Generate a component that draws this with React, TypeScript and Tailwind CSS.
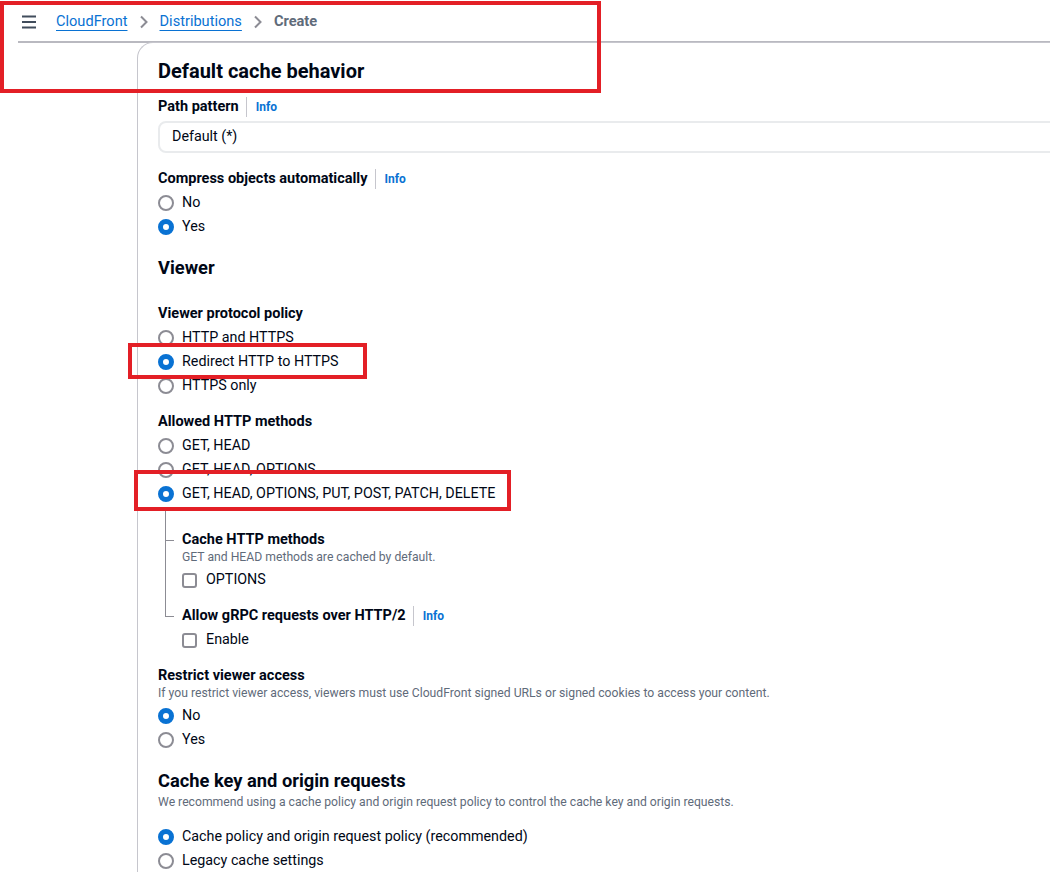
import React from "react";

const font = { fontFamily: 'Roboto, "Liberation Sans", Arial, sans-serif' };

function Radio({ label, checked = false }: { label: string; checked?: boolean }) {
  return (
    <div className="flex h-6 items-center gap-2">
      <span
        className={
          checked
            ? "box-border h-4 w-4 shrink-0 rounded-full border-[5px] border-[#0972d3] bg-white"
            : "box-border h-4 w-4 shrink-0 rounded-full border-2 border-[#8c8c94] bg-white"
        }
      />
      <span className="text-[14.3px] text-[#000716]">{label}</span>
    </div>
  );
}

function Checkbox({ label }: { label: string }) {
  return (
    <div className="flex h-6 items-center gap-[9px]">
      <span className="box-border h-[15px] w-[15px] shrink-0 rounded-[3px] border-2 border-[#8c8c94] bg-white" />
      <span className="text-[14.3px] text-[#000716]">{label}</span>
    </div>
  );
}

function Info() {
  return (
    <span className="ml-[7px] flex h-[20px] items-center border-l border-[#c6c6cd] pl-[9px] text-[12px] font-bold text-[#0972d3]">
      Info
    </span>
  );
}

function Label({ text, info = false }: { text: string; info?: boolean }) {
  return (
    <div className="flex h-5 items-center">
      <span className="text-[14.5px] font-bold text-[#000716]">{text}</span>
      {info && <Info />}
    </div>
  );
}

function Chevron() {
  return (
    <svg width="10" height="14" viewBox="0 0 10 14" className="mx-[11px]">
      <polyline points="2,1.5 7.5,7 2,12.5" fill="none" stroke="#8c8c94" strokeWidth="2" />
    </svg>
  );
}

export default function App() {
  return (
    <div className="relative h-[872px] w-[1050px] overflow-hidden bg-white text-[#000716]" style={font}>
      {/* breadcrumb bar */}
      <div className="ml-[18px] flex h-[43px] items-center border-b-2 border-[#b9b9c0] pl-[4px] pt-[2px]">
        <svg width="14" height="14" viewBox="0 0 14 14" className="mr-[20px]">
          <rect x="0" y="0.5" width="14" height="2" fill="#414d5c" />
          <rect x="0" y="6" width="14" height="2" fill="#414d5c" />
          <rect x="0" y="11.5" width="14" height="2" fill="#414d5c" />
        </svg>
        <span className="text-[14.6px] text-[#0972d3] underline decoration-1 underline-offset-[4px]">CloudFront</span>
        <Chevron />
        <span className="text-[14.6px] text-[#0972d3] underline decoration-1 underline-offset-[4px]">Distributions</span>
        <Chevron />
        <span className="text-[14.6px] font-bold text-[#5f6b7a]">Create</span>
      </div>

      {/* card */}
      <div className="-mt-[1px] ml-[137px] w-[1000px] rounded-tl-[16px] border-l border-t border-[#c6c6cd] pl-[20px] pt-[16px]">
        <h2 className="h-6 text-[20px] font-bold leading-6">Default cache behavior</h2>

        <div className="mt-[14px]">
          <Label text="Path pattern" info />
        </div>
        <div className="mt-[4px] flex h-[32px] w-[950px] items-center rounded-[8px] border-2 border-[#e9ebed] pl-[12px] text-[14.3px]">
          Default (*)
        </div>

        <div className="mt-[16px]">
          <Label text="Compress objects automatically" info />
        </div>
        <div className="mt-[2px]">
          <Radio label="No" />
          <Radio label="Yes" checked />
        </div>

        <h3 className="mt-[17px] h-6 text-[18.3px] font-bold leading-6">Viewer</h3>

        <div className="mt-[24px]">
          <Label text="Viewer protocol policy" />
        </div>
        <div className="mt-[2px]">
          <Radio label="HTTP and HTTPS" />
          <Radio label="Redirect HTTP to HTTPS" checked />
          <Radio label="HTTPS only" />
        </div>

        <div className="mt-[14px]">
          <Label text="Allowed HTTP methods" />
        </div>
        <div className="mt-[2px]">
          <Radio label="GET, HEAD" />
          <Radio label="GET, HEAD, OPTIONS" />
          <Radio label="GET, HEAD, OPTIONS, PUT, POST, PATCH, DELETE" checked />
        </div>

        {/* nested options with tree lines */}
        <div className="relative pl-[24px]">
          <span className="absolute left-[7px] top-[1px] h-[109px] w-px bg-[#8c8c94]" />
          <span className="absolute left-[7px] top-[34px] h-px w-[9px] bg-[#8c8c94]" />
          <span className="absolute left-[7px] top-[110px] h-px w-[9px] bg-[#8c8c94]" />
          <div className="pt-[25px]">
            <div className="flex h-[18px] items-center text-[14.5px] font-bold">Cache HTTP methods</div>
            <div className="h-4 text-[12.2px] leading-4 text-[#5f6b7a]">GET and HEAD methods are cached by default.</div>
            <div className="mt-[3px]">
              <Checkbox label="OPTIONS" />
            </div>
          </div>
          <div className="mt-[15px]">
            <div className="flex h-[18px] items-center">
              <span className="text-[14.5px] font-bold">Allow gRPC requests over HTTP/2</span>
              <Info />
            </div>
            <div className="mt-[3px]">
              <Checkbox label="Enable" />
            </div>
          </div>
        </div>

        <div className="mt-[15px] flex h-[18px] items-center text-[14.5px] font-bold">Restrict viewer access</div>
        <div className="h-4 text-[12.2px] leading-4 text-[#5f6b7a]">
          If you restrict viewer access, viewers must use CloudFront signed URLs or signed cookies to access your content.
        </div>
        <div className="mt-[3px]">
          <Radio label="No" checked />
          <Radio label="Yes" />
        </div>

        <h3 className="mt-[17px] h-6 text-[18.3px] font-bold leading-6">Cache key and origin requests</h3>
        <div className="mt-[1px] h-4 text-[12.2px] leading-4 text-[#5f6b7a]">
          We recommend using a cache policy and origin request policy to control the cache key and origin requests.
        </div>
        <div className="mt-[15px]">
          <Radio label="Cache policy and origin request policy (recommended)" checked />
          <Radio label="Legacy cache settings" />
        </div>
      </div>

      {/* annotation boxes */}
      <div className="pointer-events-none absolute left-0 top-[1px] h-[92px] w-[601px] border-4 border-[#e31f26]" />
      <div className="pointer-events-none absolute left-[128px] top-[343px] h-[36px] w-[239px] border-4 border-[#e31f26]" />
      <div className="pointer-events-none absolute left-[134px] top-[470px] h-[41px] w-[377px] border-4 border-[#e31f26]" />
    </div>
  );
}
